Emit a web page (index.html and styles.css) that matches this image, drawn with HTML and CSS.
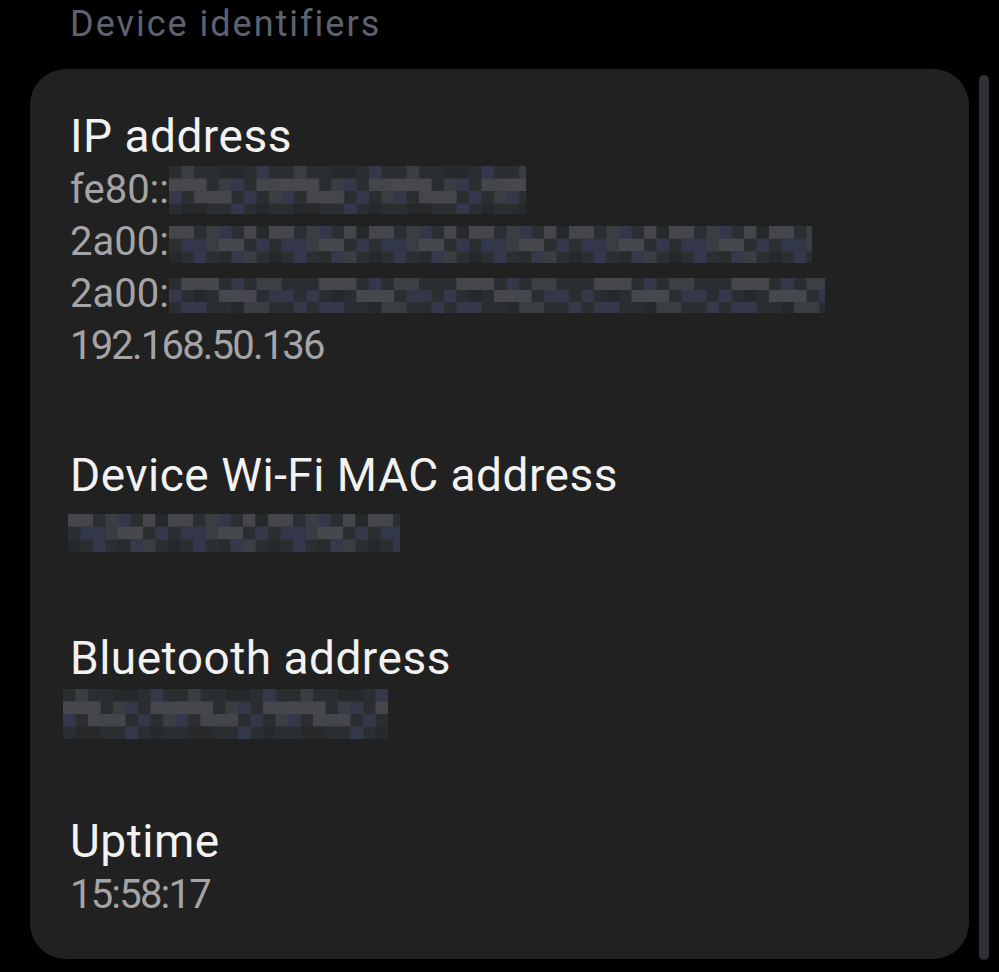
FILE: index.html
```html
<!DOCTYPE html>
<html>
<head>
<meta charset="utf-8">
<link rel="stylesheet" href="styles.css">
</head>
<body>
<svg class="defs" width="0" height="0" aria-hidden="true">
  <defs>
    <pattern id="mosA" width="100" height="38" patternUnits="userSpaceOnUse">
      <rect x="0" y="0" width="100" height="38" fill="#2c2f32"/>
      <rect x="0" y="0" width="25" height="12.7" fill="#45464b"/>
      <rect x="37.5" y="0" width="12.5" height="12.7" fill="#3a3d42"/>
      <rect x="50" y="0" width="12.5" height="12.7" fill="#34384a"/>
      <rect x="75" y="0" width="12.5" height="12.7" fill="#45464b"/>
      <rect x="87.5" y="0" width="12.5" height="12.7" fill="#26292b"/>
      <rect x="12.5" y="12.7" width="25" height="12.7" fill="#33374a"/>
      <rect x="37.5" y="12.7" width="12.5" height="12.7" fill="#3a3d42"/>
      <rect x="50" y="12.7" width="25" height="12.7" fill="#47484d"/>
      <rect x="87.5" y="12.7" width="12.5" height="12.7" fill="#34384a"/>
      <rect x="0" y="25.4" width="12.5" height="12.6" fill="#26292b"/>
      <rect x="25" y="25.4" width="12.5" height="12.6" fill="#34384a"/>
      <rect x="50" y="25.4" width="12.5" height="12.6" fill="#292c2e"/>
      <rect x="62.5" y="25.4" width="12.5" height="12.6" fill="#36394a"/>
      <rect x="75" y="25.4" width="12.5" height="12.6" fill="#3b3e43"/>
    </pattern>
    <pattern id="mosC" width="137.5" height="36" patternUnits="userSpaceOnUse">
      <rect x="0" y="0" width="137.5" height="36" fill="#2b2e31"/>
      <rect x="12.5" y="0" width="37.5" height="12" fill="#46474c"/>
      <rect x="62.5" y="0" width="12.5" height="12" fill="#34384a"/>
      <rect x="87.5" y="0" width="25" height="12" fill="#3c3f44"/>
      <rect x="0" y="12" width="12.5" height="12" fill="#34384a"/>
      <rect x="25" y="12" width="12.5" height="12" fill="#26292b"/>
      <rect x="50" y="12" width="37.5" height="12" fill="#47484d"/>
      <rect x="100" y="12" width="25" height="12" fill="#33374a"/>
      <rect x="12.5" y="24" width="25" height="12" fill="#34384a"/>
      <rect x="62.5" y="24" width="12.5" height="12" fill="#26292b"/>
      <rect x="75" y="24" width="25" height="12" fill="#3a3d42"/>
      <rect x="125" y="24" width="12.5" height="12" fill="#36394a"/>
    </pattern>
    <pattern id="mosB" width="112.5" height="50" patternUnits="userSpaceOnUse">
      <rect x="0" y="0" width="112.5" height="50" fill="#2b2e31"/>
      <rect x="12.5" y="0" width="12.5" height="12.5" fill="#3a3d42"/>
      <rect x="50" y="0" width="25" height="12.5" fill="#26292b"/>
      <rect x="87.5" y="0" width="12.5" height="12.5" fill="#34384a"/>
      <rect x="0" y="12.5" width="37.5" height="12.5" fill="#47484d"/>
      <rect x="50" y="12.5" width="12.5" height="12.5" fill="#3a3d42"/>
      <rect x="62.5" y="12.5" width="12.5" height="12.5" fill="#34384a"/>
      <rect x="87.5" y="12.5" width="25" height="12.5" fill="#45464b"/>
      <rect x="0" y="25" width="12.5" height="12.5" fill="#34384a"/>
      <rect x="25" y="25" width="37.5" height="12.5" fill="#45464b"/>
      <rect x="75" y="25" width="12.5" height="12.5" fill="#33374a"/>
      <rect x="100" y="25" width="12.5" height="12.5" fill="#3b3e43"/>
      <rect x="12.5" y="37.5" width="25" height="12.5" fill="#262829"/>
      <rect x="62.5" y="37.5" width="12.5" height="12.5" fill="#34384a"/>
      <rect x="87.5" y="37.5" width="12.5" height="12.5" fill="#26292b"/>
    </pattern>
  </defs>
</svg>

<div class="section-header">Device identifiers</div>

<div class="main-row">
  <div class="card">
    <div class="item">
      <div class="item-title">IP address</div>
      <div class="item-value">fe80::<svg class="blur blur-fe80" width="357" height="48"><rect width="357" height="48" fill="url(#mosB)"/></svg></div>
      <div class="item-value">2a00:<svg class="blur blur-v6" width="643" height="37"><rect width="643" height="37" fill="url(#mosA)"/></svg></div>
      <div class="item-value">2a00:<svg class="blur blur-v6" width="656" height="35"><rect width="656" height="35" fill="url(#mosC)"/></svg></div>
      <div class="item-value num">192.168.50.136</div>
    </div>

    <div class="item">
      <div class="item-title">Device Wi-Fi MAC address</div>
      <div class="item-value"><svg class="blur blur-mac" width="332" height="38"><rect width="332" height="38" fill="url(#mosA)"/></svg></div>
    </div>

    <div class="item">
      <div class="item-title">Bluetooth address</div>
      <div class="item-value"><svg class="blur blur-bt" width="325" height="50"><rect width="325" height="50" fill="url(#mosB)"/></svg></div>
    </div>

    <div class="item">
      <div class="item-title">Uptime</div>
      <div class="item-value num">15:58:17</div>
    </div>
  </div>
  <div class="scrollbar"></div>
</div>
</body>
</html>
```

FILE: styles.css
```css
html, body {
  margin: 0;
  padding: 0;
  background: #000000;
}

body {
  font-family: Roboto, "Noto Sans", sans-serif;
  width: 999px;
  height: 972px;
  overflow: hidden;
}

.defs {
  position: absolute;
  width: 0;
  height: 0;
}

.section-header {
  height: 69px;
  box-sizing: border-box;
  padding: 4px 0 0 70px;
  font-size: 36px;
  line-height: 40px;
  color: #5d636e;
  letter-spacing: 2px;
}

.main-row {
  display: flex;
  align-items: flex-start;
  gap: 10px;
  padding-left: 30px;
}

.card {
  width: 939px;
  box-sizing: border-box;
  background: #212121;
  border-radius: 36px;
  padding: 39px 40px 38px 40px;
  display: flex;
  flex-direction: column;
  gap: 75px;
}

.item-title {
  font-size: 46px;
  line-height: 56px;
  color: #f2f2f2;
  letter-spacing: 0.5px;
  white-space: nowrap;
}

.item-value {
  font-size: 40px;
  line-height: 52px;
  height: 52px;
  color: #a4a4a6;
  white-space: nowrap;
}

.item-value.num {
  letter-spacing: -1.8px;
}

.blur {
  display: inline-block;
  vertical-align: top;
}

.blur-fe80 {
  margin-top: 2px;
}

.blur-v6 {
  margin-top: 10px;
}

.blur-mac {
  margin-top: 11px;
  margin-left: -2px;
}

.blur-bt {
  margin-top: 3px;
  margin-left: -7px;
}

.scrollbar {
  width: 10px;
  height: 885px;
  margin-top: 6px;
  border-radius: 5px;
  background: #2e3236;
}
```
